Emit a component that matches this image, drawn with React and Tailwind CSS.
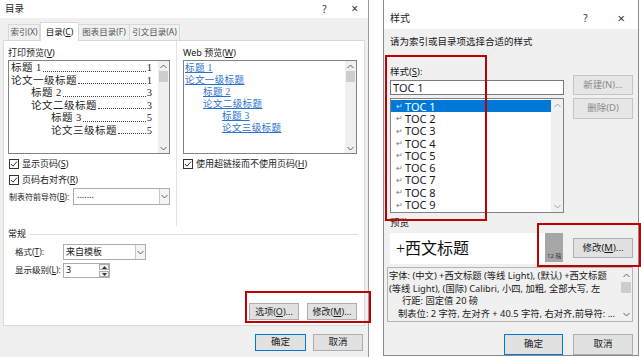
import React from 'react';

const Chevron = ({ up = false, color = '#606060' }) => (
    <svg width="7" height="5" viewBox="0 0 7 5">
        <path d={up ? 'M0.5 4 L3.5 1 L6.5 4' : 'M0.5 1 L3.5 4 L6.5 1'} fill="none" stroke={color} strokeWidth="1" />
    </svg>
);

const Check = () => (
    <span className="w-[10px] h-[10px] border border-[#333] bg-white flex items-center justify-center shrink-0">
        <svg width="8" height="8" viewBox="0 0 8 8">
            <path d="M1 4 L3 6.2 L7 1.6" fill="none" stroke="#333" strokeWidth="1" />
        </svg>
    </span>
);

const Btn = ({ children, className = '', disabled = false, primary = false }) => (
    <div className={`flex items-center justify-center bg-[#e1e1e1] border text-[9.5px] whitespace-nowrap ${primary ? 'border-[#0078d7]' : 'border-[#adadad]'} ${disabled ? 'text-[#8a8a8a] bg-[#e6e6e6] border-[#c4c4c4]' : 'text-[#1a1a1a]'} ${className}`}>
        {children}
    </div>
);

const u = (s) => <span className="underline">{s}</span>;

const printLines = [
    { t: '标题  1', n: '1', pad: 'pl-[2px]' },
    { t: '论文一级标题 ', n: '1', pad: 'pl-[2px]' },
    { t: '标题  2', n: '3', pad: 'pl-[22px]' },
    { t: '论文二级标题', n: '3', pad: 'pl-[22px]' },
    { t: '标题  3', n: '5', pad: 'pl-[42px]' },
    { t: '论文三级标题 ', n: '5', pad: 'pl-[42px]' },
];

const webLines = [
    { t: '标题  1', pad: 'pl-[1px]' },
    { t: '论文一级标题', pad: 'pl-[1px]' },
    { t: '标题  2', pad: 'pl-[19px]' },
    { t: '论文二级标题', pad: 'pl-[19px]' },
    { t: '标题  3', pad: 'pl-[38px]' },
    { t: '论文三级标题', pad: 'pl-[38px]' },
];

const ScrollBar = () => (
    <div className="w-[11px] bg-[#f0f0f0] flex flex-col items-center">
        <div className="h-[10px] flex items-center"><Chevron up /></div>
        <div className="w-[9px] h-[11px] bg-[#cdcdcd]" />
        <div className="flex-1" />
        <div className="h-[10px] flex items-center"><Chevron /></div>
    </div>
);

const TocDialog = () => (
    <div className="w-[369px] h-[357px] bg-[#f0f0f0] border-r border-[#9c9c9c] flex flex-col shrink-0">
        <div className="h-[18px] bg-white flex items-center text-[9.5px] text-[#1a1a1a]">
            <span className="pl-[5px]">目录</span>
            <span className="ml-auto text-[10px] text-[#333] w-[10px]">?</span>
            <span className="ml-[19px] mr-[10px] text-[12px] leading-none text-[#333]">×</span>
        </div>
        <div className="h-[22px] pl-[8px] flex items-end text-[8.5px] whitespace-nowrap">
            <div className="w-[32px] h-[16px] border border-b-0 border-[#d9d9d9] flex items-center justify-center text-[#555]">索引(X)</div>
            <div className="w-[39px] h-[19px] bg-white border border-b-0 border-[#d9d9d9] flex items-center justify-center text-[#111] -mb-px relative z-10">目录({u('C')})</div>
            <div className="w-[51px] h-[16px] border border-b-0 border-l-0 border-[#d9d9d9] flex items-center justify-center text-[#555]">图表目录(F)</div>
            <div className="w-[50px] h-[16px] border border-b-0 border-l-0 border-[#d9d9d9] flex items-center justify-center text-[#555]">引文目录(A)</div>
        </div>
        <div className="mx-[3px] w-[362px] h-[286px] bg-white border border-[#d9d9d9] flex flex-col text-[9px] text-[#1a1a1a] whitespace-nowrap">
            <div className="h-[185px] flex">
                <div className="ml-[4px] w-[162px] pt-[5px] flex flex-col">
                    <div className="h-[14px] leading-[14px]">打印预览({u('V')})</div>
                    <div className="h-[94px] border border-[#828282] bg-white flex">
                        <div className="flex-1 pt-[1px] pr-[6px] font-['Liberation_Serif','Noto_Sans_CJK_SC',serif] text-[10.5px] text-[#222]">
                            {printLines.map((l, i) => (
                                <div key={i} className={`h-[12.5px] leading-[12.5px] flex ${l.pad}`}>
                                    <span className="tracking-[0.5px]">{l.t}</span>
                                    <span className="flex-1 mx-[1px] mb-[3px] border-b-[1.5px] border-dotted border-[#444]" />
                                    <span>{l.n}</span>
                                </div>
                            ))}
                        </div>
                        <ScrollBar />
                    </div>
                    <div className="mt-[3px] h-[13px] flex items-center pl-[1px]">
                        <Check /><span className="ml-[3px]">显示页码({u('S')})</span>
                    </div>
                    <div className="mt-[3px] h-[13px] flex items-center pl-[1px]">
                        <Check /><span className="ml-[3px]">页码右对齐({u('R')})</span>
                    </div>
                    <div className="mt-[2px] h-[17px] flex items-center">
                        <span className="w-[65px] pl-[1px] text-[8px]">制表符前导符({u('B')}):</span>
                        <div className="w-[97px] h-[17px] bg-white border border-[#adadad] flex">
                            <span className="flex-1 pl-[3px] leading-[12px]">.......</span>
                            <div className="w-[10px] border-l border-[#c9c9c9] flex items-center justify-center bg-[#f4f4f4]"><Chevron /></div>
                        </div>
                    </div>
                </div>
                <div className="ml-[6px] w-px bg-[#e3e3e3]" />
                <div className="ml-[6px] w-[174px] pt-[5px] flex flex-col">
                    <div className="h-[14px] leading-[14px]">Web 预览({u('W')})</div>
                    <div className="h-[94px] border border-[#828282] bg-white flex">
                        <div className="flex-1 pt-[1px] text-[9.5px] text-[#2a72cf] font-['Liberation_Serif','Noto_Sans_CJK_SC',serif]">
                            {webLines.map((l, i) => (
                                <div key={i} className={`h-[12px] leading-[12px] ${l.pad}`}>
                                    <span className="underline tracking-[0.4px]">{l.t}</span>
                                </div>
                            ))}
                        </div>
                        <ScrollBar />
                    </div>
                    <div className="mt-[3px] h-[13px] flex items-center">
                        <Check /><span className="ml-[3px]">使用超链接而不使用页码({u('H')})</span>
                    </div>
                </div>
            </div>
            <div className="mt-[2px] h-[12px] flex items-center">
                <span className="ml-[4px]">常规</span>
                <div className="ml-[4px] mr-[6px] flex-1 h-px bg-[#dcdcdc]" />
            </div>
            <div className="mt-[4px] h-[16px] flex items-center">
                <span className="ml-[11px] w-[48px] text-[8.5px]">格式({u('T')}):</span>
                <div className="w-[83px] h-[16px] bg-white border border-[#adadad] flex">
                    <span className="flex-1 pl-[2px] leading-[14px]">来自模板</span>
                    <div className="w-[10px] border-l border-[#c9c9c9] flex items-center justify-center bg-[#f4f4f4]"><Chevron /></div>
                </div>
            </div>
            <div className="mt-[3px] h-[15px] flex items-center">
                <span className="ml-[11px] w-[48px] text-[8.5px]">显示级别({u('L')}):</span>
                <div className="w-[47px] h-[15px] bg-white border border-[#adadad] flex">
                    <span className="flex-1 pl-[2px] leading-[11px]">3</span>
                    <div className="w-[10px] flex flex-col">
                        <div className="h-[6px] border border-[#adadad] bg-[#f0f0f0] flex items-center justify-center">
                            <svg width="5" height="3" viewBox="0 0 5 3"><path d="M0 3 L2.5 0 L5 3 Z" fill="#333" /></svg>
                        </div>
                        <div className="h-[6px] mt-px border border-[#adadad] bg-[#f0f0f0] flex items-center justify-center">
                            <svg width="5" height="3" viewBox="0 0 5 3"><path d="M0 0 L2.5 3 L5 0 Z" fill="#333" /></svg>
                        </div>
                    </div>
                </div>
            </div>
            <div className="mt-[25px] mr-[7px] flex justify-end gap-[8px]">
                <Btn className="w-[50px] h-[17px] text-[9px]">选项({u('O')})...</Btn>
                <Btn className="w-[50px] h-[17px] text-[9px]">修改({u('M')})...</Btn>
            </div>
        </div>
        <div className="mt-[8px] pr-[5px] flex justify-end gap-[7px]">
            <Btn primary className="w-[51px] h-[17px]">确定</Btn>
            <Btn className="w-[50px] h-[17px]">取消</Btn>
        </div>
    </div>
);

const tocItems = ['TOC 1', 'TOC 2', 'TOC 3', 'TOC 4', 'TOC 5', 'TOC 6', 'TOC 7', 'TOC 8', 'TOC 9'];

const StyleDialog = () => (
    <div className="ml-[14px] w-[256px] h-[356px] bg-[#f0f0f0] border-l border-r border-b border-[#8a8a8a] flex flex-col shrink-0 text-[9.5px] text-[#1a1a1a] whitespace-nowrap">
        <div className="h-[30px] bg-white flex items-start pt-[12px] leading-[12px]">
            <span className="pl-[6px] text-[10px]">样式</span>
            <span className="ml-auto text-[10px] text-[#333]">?</span>
            <span className="ml-[30px] mr-[13px] text-[13px] leading-[12px] text-[#333]">×</span>
        </div>
        <div className="pl-[6px] flex flex-col">
            <div className="mt-[7px] h-[12px] leading-[12px]">请为索引或目录项选择合适的样式</div>
            <div className="flex">
                <div className="w-[174px] flex flex-col">
                    <div className="mt-[18px] h-[12px] leading-[12px]">样式({u('S')}):</div>
                    <div className="mt-[2px] h-[15px] bg-white border border-[#7a7a7a] pl-[2px] text-[11px] leading-[13px] font-['Noto_Sans',sans-serif]">TOC 1</div>
                    <div className="mt-[3px] h-[115px] bg-white border border-[#828282] flex">
                        <div className="flex-1 pt-[1px] font-['Noto_Sans',sans-serif]">
                            {tocItems.map((t, i) => (
                                <div key={t} className={`h-[12.3px] flex items-center text-[11px] ${i === 0 ? 'bg-[#0078d7] text-white' : 'text-[#1a1a1a]'}`}>
                                    <span className={`ml-[5px] w-[9px] text-[8px] leading-[8px] ${i === 0 ? 'text-[#cfe3f7]' : 'text-[#777]'}`}>↵</span>
                                    <span className="leading-[11px]">{t}</span>
                                </div>
                            ))}
                        </div>
                        <div className="w-[12px] bg-[#f0f0f0] flex flex-col items-center">
                            <div className="h-[12px] flex items-center"><Chevron up color="#a0a0a0" /></div>
                            <div className="flex-1" />
                            <div className="h-[12px] flex items-center"><Chevron color="#a0a0a0" /></div>
                        </div>
                    </div>
                </div>
                <div className="ml-[9px] w-[60px] pt-[27px] flex flex-col">
                    <Btn disabled className="h-[20px]">新建(N)...</Btn>
                    <Btn disabled className="mt-[3px] h-[21px]">删除(D)</Btn>
                </div>
            </div>
            <div className="mt-[4px] h-[12px] leading-[12px]">预览</div>
            <div className="mt-[4px] flex items-start">
                <div className="w-[155px] h-[31px] bg-white flex items-center pl-[6px] text-[16px] font-['Liberation_Serif','Noto_Sans_CJK_SC',serif] text-[#111]">+西文标题</div>
                <div className="w-[18px] h-[29px] bg-[#a6a6a6] flex items-end pl-[2px] pb-[2px] text-[6px] leading-[7px] text-[#333]">12 磅</div>
                <Btn className="ml-[10px] mt-[5px] w-[60px] h-[20px]">修改({u('M')})...</Btn>
            </div>
            <div className="-ml-[3px] mt-[3px] w-[246px] h-[55px] border border-[#b5b5b5] flex text-[9.3px] leading-[12.7px]">
                <div className="flex-1 pt-[2px] pl-px overflow-hidden">
                    <div>字体: (中文) +西文标题 (等线 Light), (默认) +西文标题</div>
                    <div>(等线 Light), (国际) Calibri, 小四, 加粗, 全部大写, 左</div>
                    <div className="pl-[13px]">行距: 固定值 20 磅</div>
                    <div className="pl-[9px]">制表位: 2 字符, 左对齐 +  40.5 字符, 右对齐,前导符: ...</div>
                </div>
                <div className="w-[12px] flex flex-col items-center">
                    <div className="h-[14px] flex items-center"><Chevron up /></div>
                    <div className="w-[10px] h-[11px] bg-[#cdcdcd]" />
                    <div className="flex-1" />
                    <div className="h-[14px] flex items-center"><Chevron /></div>
                </div>
            </div>
            <div className="mt-[12px] pr-[5px] flex justify-end gap-[10px]">
                <Btn primary className="w-[59px] h-[21px]">确定</Btn>
                <Btn className="w-[60px] h-[21px]">取消</Btn>
            </div>
        </div>
    </div>
);

export default function App() {
    return (
        <div className="relative w-[641px] h-[357px] bg-white overflow-hidden flex font-[family-name:'Noto_Sans','Noto_Sans_CJK_SC',sans-serif]">
            <TocDialog />
            <StyleDialog />
            {/* red highlight boxes */}
            <div className="absolute left-[245px] top-[291px] w-[126px] h-[32px] border-2 border-[#c00000]" />
            <div className="absolute left-[385px] top-[55px] w-[102px] h-[166px] border-2 border-[#c00000]" />
            <div className="absolute left-[537px] top-[223px] w-[104px] h-[44px] border-2 border-[#c00000]" />
        </div>
    );
}
